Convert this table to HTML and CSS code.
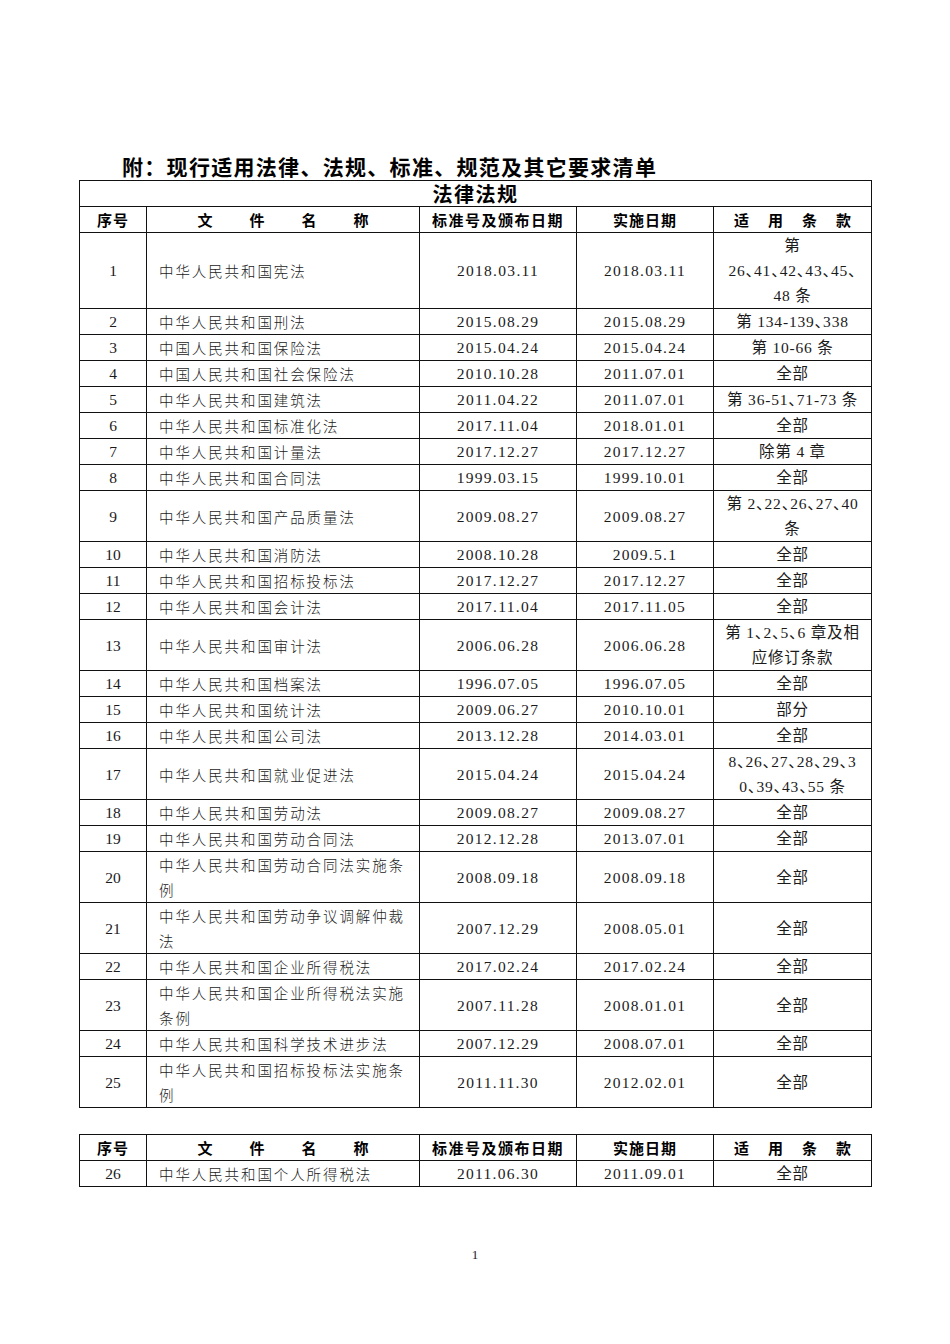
FILE: index.html
```html
<!DOCTYPE html>
<html lang="zh-CN">
<head>
<meta charset="utf-8">
<title>现行适用法律、法规、标准、规范及其它要求清单</title>
<link rel="stylesheet" href="styles.css">
</head>
<body>
<div class="page">
  <h1 class="title">附：现行适用法律、法规、标准、规范及其它要求清单</h1>
  <table class="grid">
    <colgroup>
      <col class="c-no"><col class="c-name"><col class="c-std"><col class="c-date"><col class="c-clause">
    </colgroup>
    <tr><td colspan="5" class="section">法律法规</td></tr>
    <tr class="head">
      <td>序号</td><td class="h-name">文件名称</td><td class="h-std">标准号及颁布日期</td><td>实施日期</td><td class="h-clause">适用条款</td>
    </tr>
    <tr><td>1</td><td class="name">中华人民共和国宪法</td><td class="d">2018.03.11</td><td class="d">2018.03.11</td><td class="cl">第<br>26、41、42、43、45、<br>48 条</td></tr>
    <tr><td>2</td><td class="name">中华人民共和国刑法</td><td class="d">2015.08.29</td><td class="d">2015.08.29</td><td class="cl">第 134-139、338</td></tr>
    <tr><td>3</td><td class="name">中国人民共和国保险法</td><td class="d">2015.04.24</td><td class="d">2015.04.24</td><td class="cl">第 10-66 条</td></tr>
    <tr><td>4</td><td class="name">中国人民共和国社会保险法</td><td class="d">2010.10.28</td><td class="d">2011.07.01</td><td class="cl">全部</td></tr>
    <tr><td>5</td><td class="name">中华人民共和国建筑法</td><td class="d">2011.04.22</td><td class="d">2011.07.01</td><td class="cl">第 36-51、71-73 条</td></tr>
    <tr><td>6</td><td class="name">中华人民共和国标准化法</td><td class="d">2017.11.04</td><td class="d">2018.01.01</td><td class="cl">全部</td></tr>
    <tr><td>7</td><td class="name">中华人民共和国计量法</td><td class="d">2017.12.27</td><td class="d">2017.12.27</td><td class="cl">除第 4 章</td></tr>
    <tr><td>8</td><td class="name">中华人民共和国合同法</td><td class="d">1999.03.15</td><td class="d">1999.10.01</td><td class="cl">全部</td></tr>
    <tr><td>9</td><td class="name">中华人民共和国产品质量法</td><td class="d">2009.08.27</td><td class="d">2009.08.27</td><td class="cl">第 2、22、26、27、40<br>条</td></tr>
    <tr><td>10</td><td class="name">中华人民共和国消防法</td><td class="d">2008.10.28</td><td class="d">2009.5.1</td><td class="cl">全部</td></tr>
    <tr><td>11</td><td class="name">中华人民共和国招标投标法</td><td class="d">2017.12.27</td><td class="d">2017.12.27</td><td class="cl">全部</td></tr>
    <tr><td>12</td><td class="name">中华人民共和国会计法</td><td class="d">2017.11.04</td><td class="d">2017.11.05</td><td class="cl">全部</td></tr>
    <tr><td>13</td><td class="name">中华人民共和国审计法</td><td class="d">2006.06.28</td><td class="d">2006.06.28</td><td class="cl">第 1、2、5、6 章及相<br>应修订条款</td></tr>
    <tr><td>14</td><td class="name">中华人民共和国档案法</td><td class="d">1996.07.05</td><td class="d">1996.07.05</td><td class="cl">全部</td></tr>
    <tr><td>15</td><td class="name">中华人民共和国统计法</td><td class="d">2009.06.27</td><td class="d">2010.10.01</td><td class="cl">部分</td></tr>
    <tr><td>16</td><td class="name">中华人民共和国公司法</td><td class="d">2013.12.28</td><td class="d">2014.03.01</td><td class="cl">全部</td></tr>
    <tr><td>17</td><td class="name">中华人民共和国就业促进法</td><td class="d">2015.04.24</td><td class="d">2015.04.24</td><td class="cl">8、26、27、28、29、3<br>0、39、43、55 条</td></tr>
    <tr><td>18</td><td class="name">中华人民共和国劳动法</td><td class="d">2009.08.27</td><td class="d">2009.08.27</td><td class="cl">全部</td></tr>
    <tr><td>19</td><td class="name">中华人民共和国劳动合同法</td><td class="d">2012.12.28</td><td class="d">2013.07.01</td><td class="cl">全部</td></tr>
    <tr><td>20</td><td class="name">中华人民共和国劳动合同法实施条<br>例</td><td class="d">2008.09.18</td><td class="d">2008.09.18</td><td class="cl">全部</td></tr>
    <tr><td>21</td><td class="name">中华人民共和国劳动争议调解仲裁<br>法</td><td class="d">2007.12.29</td><td class="d">2008.05.01</td><td class="cl">全部</td></tr>
    <tr><td>22</td><td class="name">中华人民共和国企业所得税法</td><td class="d">2017.02.24</td><td class="d">2017.02.24</td><td class="cl">全部</td></tr>
    <tr><td>23</td><td class="name">中华人民共和国企业所得税法实施<br>条例</td><td class="d">2007.11.28</td><td class="d">2008.01.01</td><td class="cl">全部</td></tr>
    <tr><td>24</td><td class="name">中华人民共和国科学技术进步法</td><td class="d">2007.12.29</td><td class="d">2008.07.01</td><td class="cl">全部</td></tr>
    <tr><td>25</td><td class="name">中华人民共和国招标投标法实施条<br>例</td><td class="d">2011.11.30</td><td class="d">2012.02.01</td><td class="cl">全部</td></tr>
  </table>

  <table class="grid second">
    <colgroup>
      <col class="c-no"><col class="c-name"><col class="c-std"><col class="c-date"><col class="c-clause">
    </colgroup>
    <tr class="head">
      <td>序号</td><td class="h-name">文件名称</td><td class="h-std">标准号及颁布日期</td><td>实施日期</td><td class="h-clause">适用条款</td>
    </tr>
    <tr><td>26</td><td class="name">中华人民共和国个人所得税法</td><td class="d">2011.06.30</td><td class="d">2011.09.01</td><td class="cl">全部</td></tr>
  </table>

  <div class="pageno">1</div>
</div>
</body>
</html>
```

FILE: styles.css
```css
html, body {
  margin: 0;
  padding: 0;
  background: #ffffff;
}

body {
  font-family: "Liberation Serif", "Noto Sans CJK SC", serif;
  color: #1a1a1a;
}

.page {
  width: 950px;
  height: 1344px;
  padding: 0 79px;
  box-sizing: border-box;
}

.title {
  margin: 0;
  padding: 152px 0 0 43px;
  height: 28px;
  font-family: "Noto Sans CJK SC", sans-serif;
  font-size: 21px;
  font-weight: 700;
  line-height: 28px;
  letter-spacing: 1.3px;
  color: #000;
  white-space: nowrap;
}

.grid {
  width: 792px;
  border-collapse: collapse;
  table-layout: fixed;
}

.c-no { width: 67px; }
.c-name { width: 273px; }
.c-std { width: 157px; }
.c-date { width: 137px; }
.c-clause { width: 158px; }

.grid td {
  border: 1px solid #111;
  padding: 0;
  height: 25px;
  line-height: 25px;
  font-size: 15.5px;
  text-align: center;
  vertical-align: middle;
  white-space: nowrap;
}

.grid td.section {
  font-family: "Noto Sans CJK SC", sans-serif;
  font-size: 20px;
  font-weight: 700;
  letter-spacing: 1.5px;
  color: #000;
}

.grid tr.head td {
  font-family: "Noto Sans CJK SC", sans-serif;
  font-size: 15px;
  font-weight: 700;
  color: #000;
  letter-spacing: 1px;
}

.grid tr.head td.h-name {
  letter-spacing: 37px;
  padding-left: 37px;
}

.grid tr.head td.h-std {
  letter-spacing: 1.5px;
}

.grid tr.head td.h-clause {
  letter-spacing: 19px;
  padding-left: 19px;
}

.grid td.name {
  text-align: left;
  padding-left: 12px;
  font-family: "Noto Sans CJK SC", sans-serif;
  font-size: 14.5px;
  letter-spacing: 1.9px;
  font-weight: 300;
}

.grid td.d {
  letter-spacing: 1.3px;
}

.grid td.cl {
  font-size: 15.5px;
  letter-spacing: 0.8px;
  font-feature-settings: "halt" 1;
}

.second {
  margin-top: 26px;
}

.pageno {
  margin-top: 60px;
  text-align: center;
  font-size: 13px;
  line-height: 16px;
}
```
